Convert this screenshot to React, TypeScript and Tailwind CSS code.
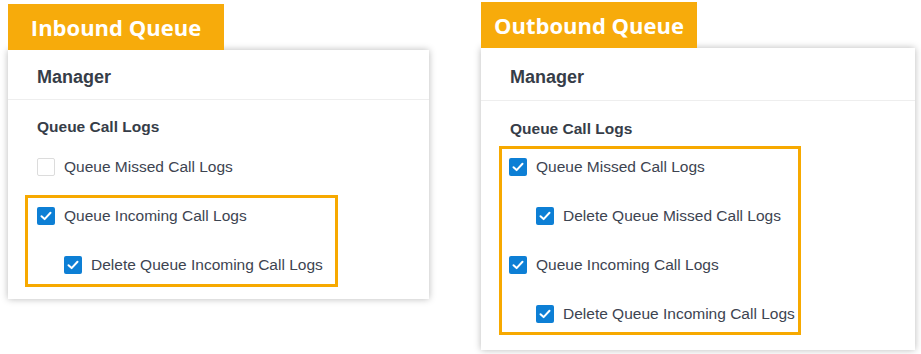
import { Fragment } from 'react'

type Row = { label: string; checked: boolean; sub?: boolean }

type PanelProps = {
  title: string
  rows: Row[]
  boxed: Row[]
  className: string
  headerH: string
  bodyPt: string
  bodyPb: string
  titleGap: string
  boxClass: string
}

function Check({ checked }: { checked: boolean }): JSX.Element {
  if (!checked) {
    return <span className="h-[18px] w-[18px] shrink-0 rounded-[2px] border border-[#dcdcdc] bg-white" />
  }
  return (
    <span className="flex h-[18px] w-[18px] shrink-0 items-center justify-center rounded-[2px] bg-[#0d7fd5]">
      <svg width="12" height="10" viewBox="0 0 12 10" fill="none">
        <path d="M1.5 5.2 L4.6 8.1 L10.5 1.8" stroke="#fff" strokeWidth="2" strokeLinecap="round" strokeLinejoin="round" />
      </svg>
    </span>
  )
}

function LogRow({ row }: { row: Row }): JSX.Element {
  return (
    <div className={`flex h-[34px] items-center gap-[9px] ${row.sub ? 'pl-[27px]' : ''}`}>
      <Check checked={row.checked} />
      <span className="text-[15.5px] text-[#3d4451]">{row.label}</span>
    </div>
  )
}

function Panel(p: PanelProps): JSX.Element {
  return (
    <div className={`flex flex-col ${p.className}`}>
      <div className="relative z-10 flex h-[46px] w-[216px] items-center justify-center bg-[#f7ab0b] font-['Open_Sans',sans-serif] text-[22px] font-bold text-white">
        {p.title}
      </div>
      <div className="bg-white shadow-[0_0_7px_rgba(0,0,0,0.28)]">
        <div className={`flex items-center border-b border-[#eeeeee] pl-[29px] pt-[6px] text-[18px] font-bold text-[#363d48] ${p.headerH}`}>
          Manager
        </div>
        <div className={`flex flex-col pl-[29px] ${p.bodyPt} ${p.bodyPb}`}>
          <div className={`h-[20px] text-[15.5px] font-bold leading-[20px] text-[#363d48] ${p.titleGap}`}>
            Queue Call Logs
          </div>
          {p.rows.map((r) => (
            <Fragment key={r.label}>
              <LogRow row={r} />
              <div className="h-[11px]" />
            </Fragment>
          ))}
          <div className={`flex flex-col gap-[15px] border-[3px] border-[#f7a900] ${p.boxClass}`}>
            {p.boxed.map((r) => (
              <LogRow key={r.label} row={r} />
            ))}
          </div>
        </div>
      </div>
    </div>
  )
}

export default function App(): JSX.Element {
  return (
    <div className="flex h-[354px] w-[921px] items-start bg-white font-['Liberation_Sans',Arial,sans-serif]">
      <Panel
        title="Inbound Queue"
        className="ml-[8px] mt-[4px] w-[421px]"
        headerH="h-[50px]"
        bodyPt="pt-[17px]"
        bodyPb="pb-[12px]"
        titleGap="mb-[13px]"
        boxClass="-ml-[12px] w-[313px] pl-[9px] pt-[1px] pb-[2px]"
        rows={[{ label: 'Queue Missed Call Logs', checked: false }]}
        boxed={[
          { label: 'Queue Incoming Call Logs', checked: true },
          { label: 'Delete Queue Incoming Call Logs', checked: true, sub: true }
        ]}
      />
      <Panel
        title="Outbound Queue"
        className="ml-[52px] mt-[2px] w-[434px]"
        headerH="h-[53px]"
        bodyPt="pt-[18px]"
        bodyPb="pb-[15px]"
        titleGap="mb-[7px]"
        boxClass="-ml-[11px] w-[302px] pl-[7px] pt-[1px] pb-[1px]"
        rows={[]}
        boxed={[
          { label: 'Queue Missed Call Logs', checked: true },
          { label: 'Delete Queue Missed Call Logs', checked: true, sub: true },
          { label: 'Queue Incoming Call Logs', checked: true },
          { label: 'Delete Queue Incoming Call Logs', checked: true, sub: true }
        ]}
      />
    </div>
  )
}
